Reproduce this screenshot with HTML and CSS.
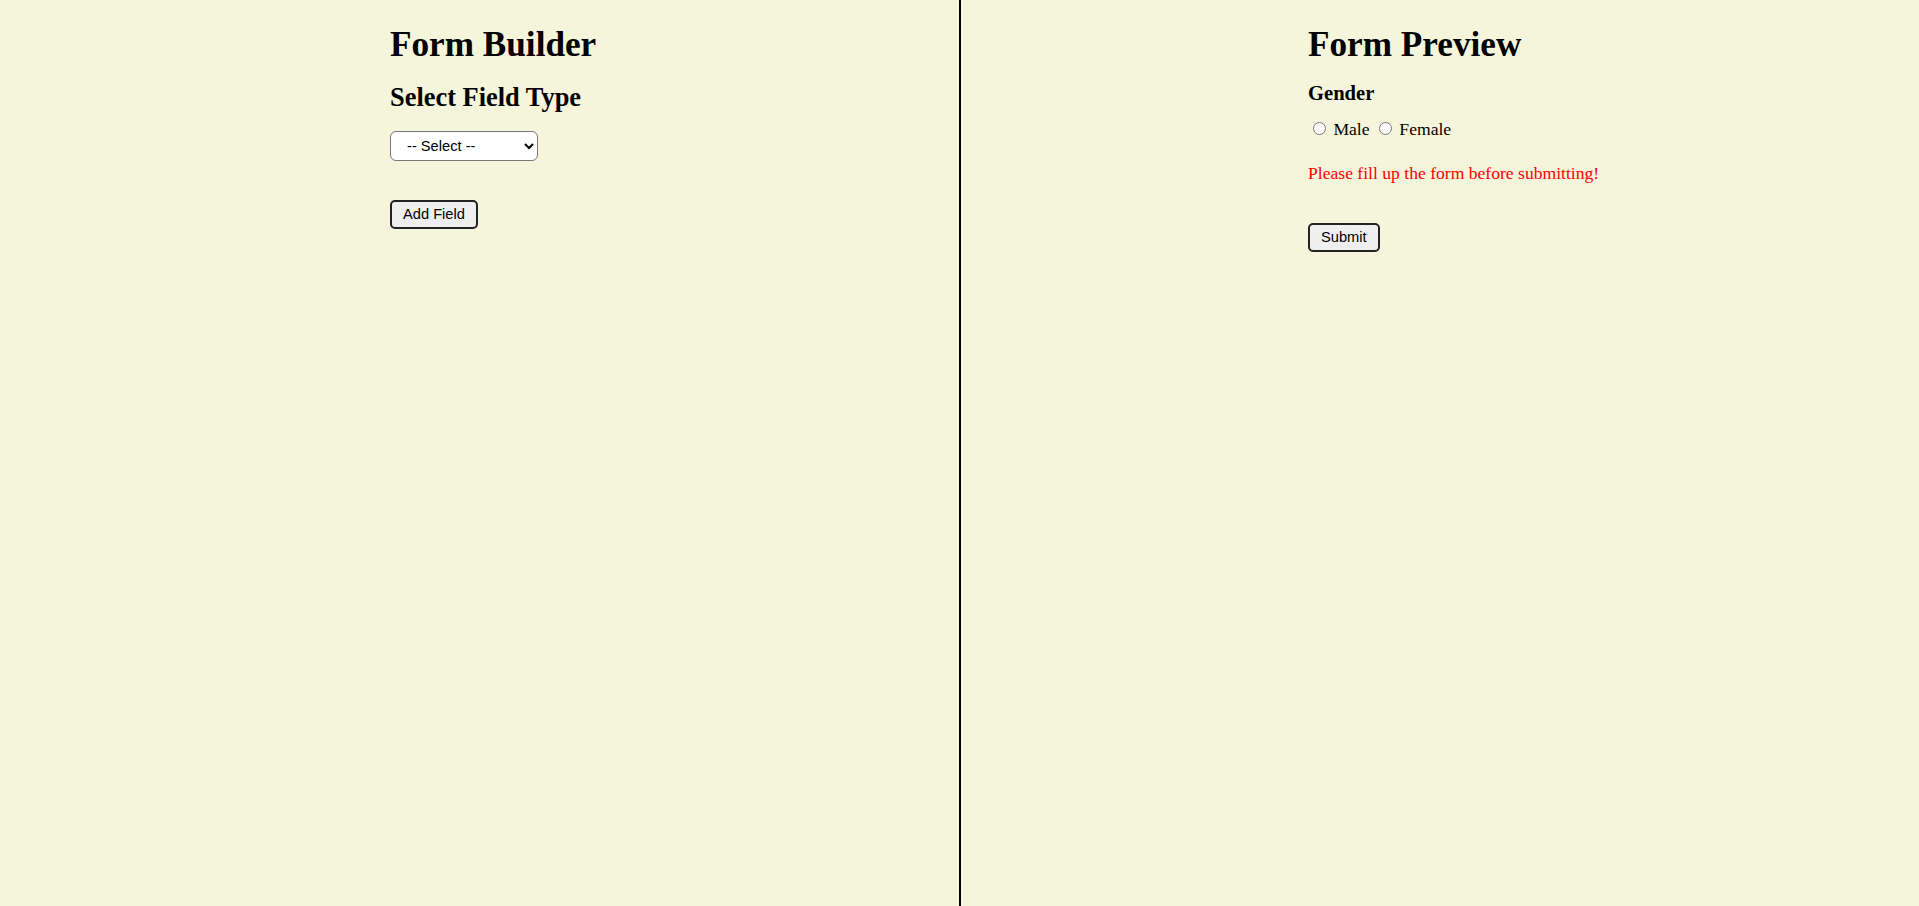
FILE: index.html
```html
<!DOCTYPE html>
<html lang="en">
<head>
<meta charset="utf-8">
<title>Form Builder</title>
<link rel="stylesheet" href="styles.css">
</head>
<body>
<div class="app">
  <section class="panel builder">
    <h1 class="title">Form Builder</h1>
    <h2 class="subtitle">Select Field Type</h2>
    <select class="field-select">
      <option>-- Select --</option>
      <option>Text</option>
      <option>Radio</option>
      <option>Checkbox</option>
    </select>
    <div class="actions">
      <button class="btn" type="button">Add Field</button>
    </div>
  </section>
  <section class="panel preview">
    <h1 class="title">Form Preview</h1>
    <form class="preview-form">
      <h3 class="field-label">Gender</h3>
      <div class="radio-row">
        <label class="radio"><input type="radio" name="gender"> Male</label>
        <label class="radio"><input type="radio" name="gender"> Female</label>
      </div>
      <p class="error">Please fill up the form before submitting!</p>
      <div class="actions actions-submit">
        <button class="btn" type="submit">Submit</button>
      </div>
    </form>
  </section>
</div>
</body>
</html>
```

FILE: styles.css
```css
html, body {
  margin: 0;
  padding: 0;
}

body {
  background: #f5f5dc;
  font-family: "Liberation Serif", "Times New Roman", serif;
  font-size: 17.6px;
  color: #000;
}

.app {
  display: grid;
  grid-template-columns: 959px 1fr;
  min-height: 100vh;
}

.panel {
  display: flex;
  flex-direction: column;
  align-items: flex-start;
}

.builder {
  padding-left: 390px;
}

.preview {
  border-left: 2px solid #000;
  padding-left: 347px;
}

.title {
  font-size: 35.2px;
  font-weight: bold;
  margin: 24.5px 0 0 0;
}

.subtitle {
  font-size: 26.4px;
  font-weight: bold;
  margin: 17.3px 0 0 0;
}

.field-select {
  margin-top: 18.5px;
  width: 148px;
  height: 30px;
  padding: 0 8px 0 12px;
  font-family: "Liberation Sans", Arial, sans-serif;
  font-size: 14.67px;
  color: #000;
  background: #fff;
  border: 1px solid #767676;
  border-radius: 6px;
}

.actions {
  margin-top: 38.5px;
}

.btn {
  font-family: "Liberation Sans", Arial, sans-serif;
  font-size: 14.67px;
  color: #000;
  background: #efefef;
  border: 2px solid #222;
  border-radius: 5px;
  padding: 0 11px;
  height: 29px;
  cursor: pointer;
}

.preview-form {
  display: flex;
  flex-direction: column;
  align-items: flex-start;
}

.field-label {
  font-size: 20.6px;
  font-weight: bold;
  margin: 17.5px 0 0 0;
}

.radio-row {
  margin-top: 14px;
}

.radio input {
  margin: 3px 3px 0 5px;
}

.error {
  color: #ff0000;
  margin: 23.4px 0 0 0;
}

.actions-submit {
  margin-top: 38.6px;
}
```
